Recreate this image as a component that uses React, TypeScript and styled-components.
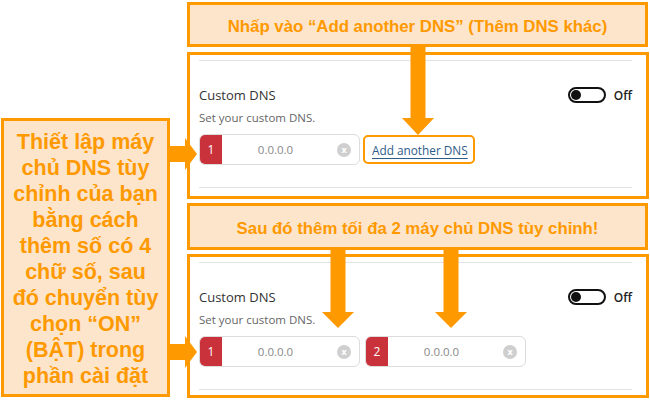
import { createGlobalStyle, styled } from "styled-components"

const ORANGE = "#ff9900"
const PEACH = "#fde5cc"

const GlobalStyle = createGlobalStyle`
  html, body {
    margin: 0;
    padding: 0;
    background: #fff;
  }
  body {
    font-family: "Open Sans", "Liberation Sans", sans-serif;
  }
`

const Page = styled.div`
  position: relative;
  width: 650px;
  height: 400px;
  box-sizing: border-box;
  padding: 2px 1px 2px 1px;
  display: grid;
  grid-template-columns: 169px 1fr;
  column-gap: 17px;
  background: #fff;
  overflow: hidden;
`

const LeftCol = styled.div`
  display: flex;
  flex-direction: column;
  justify-content: flex-end;
`

const Callout = styled.div`
  box-sizing: border-box;
  height: 279px;
  margin-bottom: 1px;
  border: 3px solid ${ORANGE};
  background: ${PEACH};
  padding-top: 8px;
  font-family: "Liberation Sans", Arial, sans-serif;
  font-weight: 700;
  font-size: 21.5px;
  line-height: 26px;
  color: ${ORANGE};
  text-align: center;
  white-space: nowrap;
`

const RightCol = styled.div`
  display: flex;
  flex-direction: column;
  gap: 4px;
`

const Banner = styled.div<{ $h: number; $mb?: number }>`
  box-sizing: border-box;
  height: ${(p) => p.$h}px;
  margin-right: 1px;
  margin-bottom: ${(p) => p.$mb ?? 0}px;
  border: 3px solid ${ORANGE};
  background: ${PEACH};
  display: flex;
  align-items: center;
  justify-content: center;
  padding-top: 4px;
  font-family: "Liberation Sans", Arial, sans-serif;
  font-weight: 700;
  font-size: 16.8px;
  color: ${ORANGE};
`

const Panel = styled.div<{ $h: number }>`
  box-sizing: border-box;
  height: ${(p) => p.$h}px;
  border: 3px solid ${ORANGE};
  background: #fff;
  padding: 0 14px 0 9px;
  display: flex;
  flex-direction: column;
`

const Divider = styled.div<{ $mt: number }>`
  height: 1px;
  background: #e3e3e3;
  margin-top: ${(p) => p.$mt}px;
`

const Header = styled.div`
  display: flex;
  align-items: center;
  justify-content: space-between;
  margin-top: 25px;
  height: 18px;
`

const Title = styled.div`
  font-size: 13px;
  color: #333;
`

const ToggleWrap = styled.div`
  display: flex;
  align-items: center;
  gap: 8px;
`

const Toggle = styled.div`
  box-sizing: border-box;
  width: 38px;
  height: 16px;
  border: 2px solid #111;
  border-radius: 8px;
  display: flex;
  align-items: center;
  padding-left: 1px;
`

const Knob = styled.div`
  width: 10px;
  height: 10px;
  border-radius: 50%;
  background: #111;
`

const ToggleLabel = styled.span`
  font-size: 12px;
  font-weight: 600;
  color: #222;
`

const Subtitle = styled.div`
  margin-top: 6px;
  font-size: 11.5px;
  line-height: 16px;
  color: #666;
`

const InputRow = styled.div`
  display: flex;
  align-items: center;
  gap: 5px;
  margin-top: 8px;
`

const DnsInput = styled.div`
  box-sizing: border-box;
  width: 161px;
  height: 31px;
  border: 1px solid #dcdcdc;
  border-radius: 6px;
  display: flex;
  align-items: stretch;
  overflow: hidden;
  background: #fff;
`

const Badge = styled.div`
  width: 22px;
  background: #c9323a;
  color: #fff;
  font-size: 12px;
  display: flex;
  align-items: center;
  justify-content: center;
`

const Value = styled.div`
  flex: 1;
  display: flex;
  align-items: center;
  justify-content: center;
  font-size: 11.5px;
  color: #888;
`

const ClearArea = styled.div`
  width: 30px;
  display: flex;
  align-items: center;
  justify-content: center;
`

const ClearDot = styled.div`
  width: 14px;
  height: 14px;
  border-radius: 50%;
  background: #cfcfcf;
  color: #fff;
  font-size: 9px;
  font-weight: 700;
  line-height: 13px;
  text-align: center;
`

const LinkBox = styled.div`
  box-sizing: border-box;
  height: 29px;
  margin-left: -2px;
  border: 2px solid ${ORANGE};
  border-radius: 5px;
  padding: 0 5px 0 7px;
  display: flex;
  align-items: center;
`

const AddLink = styled.a`
  font-size: 11.8px;
  color: #2e5c8a;
  text-decoration: underline;
  text-underline-offset: 3px;
  cursor: pointer;
`

const ArrowSvg = styled.svg<{ $left: number; $top: number }>`
  position: absolute;
  left: ${(p) => p.$left}px;
  top: ${(p) => p.$top}px;
  display: block;
`

const SHAFT = 15
const HEAD = 32

function DownArrow({ cx, from, to, headAt }: { cx: number; from: number; to: number; headAt: number }) {
  const w = HEAD
  const h = to - from
  const ht = headAt - from
  const a = w / 2 - SHAFT / 2
  const b = w / 2 + SHAFT / 2
  const pts = `${a},0 ${b},0 ${b},${ht} ${w},${ht} ${w / 2},${h} 0,${ht} ${a},${ht}`
  return (
    <ArrowSvg $left={cx - w / 2} $top={from} width={w} height={h} viewBox={`0 0 ${w} ${h}`}>
      <polygon points={pts} fill={ORANGE} />
    </ArrowSvg>
  )
}

function RightArrow({ cy, from, to, headAt }: { cy: number; from: number; to: number; headAt: number }) {
  const h = HEAD
  const w = to - from
  const hl = headAt - from
  const a = h / 2 - 8
  const b = h / 2 + 8
  const pts = `0,${a} ${hl},${a} ${hl},0 ${w},${h / 2} ${hl},${h} ${hl},${b} 0,${b}`
  return (
    <ArrowSvg $left={from} $top={cy - h / 2} width={w} height={h} viewBox={`0 0 ${w} ${h}`}>
      <polygon points={pts} fill={ORANGE} />
    </ArrowSvg>
  )
}

function DnsField({ n }: { n: number }) {
  return (
    <DnsInput>
      <Badge>{n}</Badge>
      <Value>0.0.0.0</Value>
      <ClearArea>
        <ClearDot>x</ClearDot>
      </ClearArea>
    </DnsInput>
  )
}

function DnsPanel({ h, children }: { h: number; children: React.ReactNode }) {
  return (
    <Panel $h={h}>
      <Divider $mt={5} />
      <Header>
        <Title>Custom DNS</Title>
        <ToggleWrap>
          <Toggle>
            <Knob />
          </Toggle>
          <ToggleLabel>Off</ToggleLabel>
        </ToggleWrap>
      </Header>
      <Subtitle>Set your custom DNS.</Subtitle>
      <InputRow>{children}</InputRow>
      <Divider $mt={22} />
    </Panel>
  )
}

export default function App() {
  return (
    <>
      <GlobalStyle />
      <Page>
        <LeftCol>
          <Callout>
            Thiết lập máy
            <br />
            chủ DNS tùy
            <br />
            chỉnh của bạn
            <br />
            bằng cách
            <br />
            thêm số có 4
            <br />
            chữ số, sau
            <br />
            đó chuyển tùy
            <br />
            chọn “ON”
            <br />
            (BẬT) trong
            <br />
            phần cài đặt
          </Callout>
        </LeftCol>
        <RightCol>
          <Banner $h={45} $mb={1}>
            Nhấp vào “Add another DNS” (Thêm DNS khác)
          </Banner>
          <DnsPanel h={147}>
            <DnsField n={1} />
            <LinkBox>
              <AddLink>Add another DNS</AddLink>
            </LinkBox>
          </DnsPanel>
          <Banner $h={47}>Sau đó thêm tối đa 2 máy chủ DNS tùy chỉnh!</Banner>
          <DnsPanel h={144}>
            <DnsField n={1} />
            <DnsField n={2} />
          </DnsPanel>
        </RightCol>

        <DownArrow cx={418} from={46} to={135} headAt={118} />
        <DownArrow cx={338} from={250} to={328} headAt={312} />
        <DownArrow cx={451} from={250} to={328} headAt={312} />
        <RightArrow cy={154} from={170} to={197} headAt={185} />
        <RightArrow cy={352} from={170} to={197} headAt={185} />
      </Page>
    </>
  )
}
